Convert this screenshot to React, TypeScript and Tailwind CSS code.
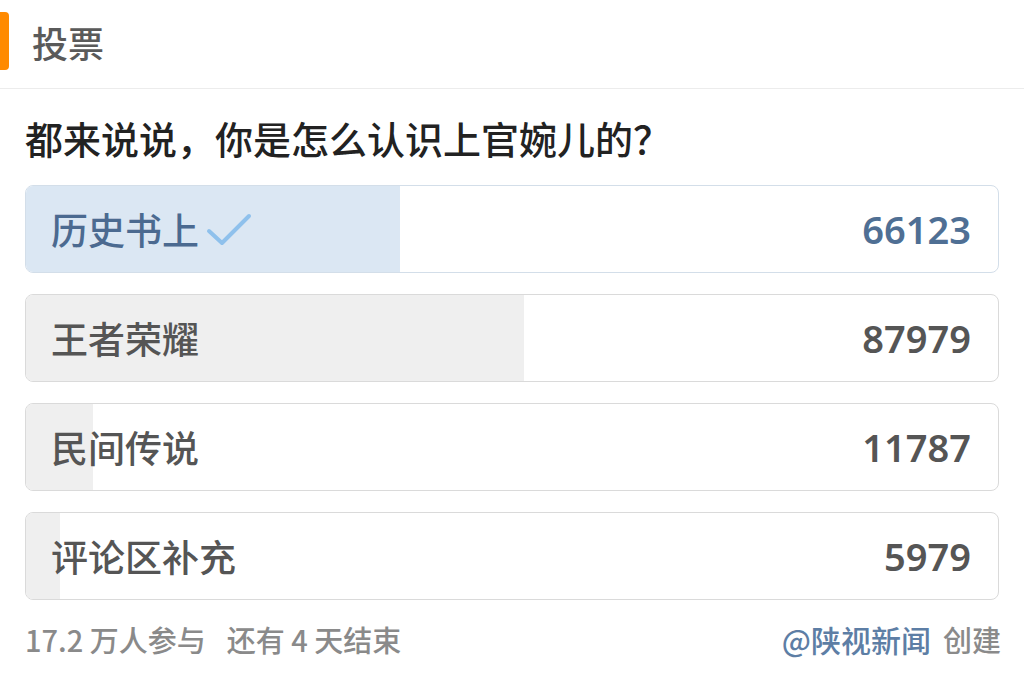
import React from "react";

const options = [
  { label: "历史书上", count: 66123, selected: true },
  { label: "王者荣耀", count: 87979, selected: false },
  { label: "民间传说", count: 11787, selected: false },
  { label: "评论区补充", count: 5979, selected: false },
];

const total = options.reduce((s, o) => s + o.count, 0);

const font = { fontFamily: '"Noto Sans CJK SC", "Noto Sans", sans-serif' };
const numFont = { fontFamily: '"Noto Sans", "Noto Sans CJK SC", sans-serif' };

function Check() {
  return (
    <svg width="46" height="34" viewBox="0 0 46 34" className="ml-[7px] mt-[2px]">
      <path d="M3 18 L16 30 L43 3" fill="none" stroke="#8fc1ec" strokeWidth="4" strokeLinecap="round" strokeLinejoin="round" />
    </svg>
  );
}

export default function App() {
  return (
    <div className="w-[1024px] h-[681px] bg-white overflow-hidden" style={font}>
      <div className="h-[89px] flex items-center border-b border-[#ececec] relative">
        <div className="absolute left-0 top-[12px] w-[9px] h-[58px] bg-[#ff8a00] rounded-r-[4px]" />
        <span className="ml-[32px] text-[36px] text-[#5a5a5a] font-medium leading-none -mt-[4px]">投票</span>
      </div>
      <div className="px-[25px]">
        <div className="h-[96px] flex items-center text-[38px] text-[#222] font-medium leading-none pt-[2px]">
          都来说说，你是怎么认识上官婉儿的？
        </div>
        <div className="flex flex-col gap-[21px]">
          {options.map((o) => (
            <div
              key={o.label}
              className={`relative h-[88px] rounded-[8px] border overflow-hidden ${o.selected ? "border-[#d3dee9]" : "border-[#dadada]"}`}
            >
              <div
                className={`absolute left-0 top-0 bottom-0 ${o.selected ? "bg-[#dbe7f3]" : "bg-[#efefef]"}`}
                style={{ width: `${(o.count / total) * 100}%` }}
              />
              <div className="relative h-full flex items-center justify-between pl-[25px] pr-[27px]">
                <div className="flex items-center">
                  <span className={`text-[37px] leading-none font-medium ${o.selected ? "text-[#4b6a90]" : "text-[#555]"}`}>
                    {o.label}
                  </span>
                  {o.selected && <Check />}
                </div>
                <span
                  className={`text-[38px] leading-none font-semibold ${o.selected ? "text-[#4f6f94]" : "text-[#555]"}`}
                  style={numFont}
                >
                  {o.count}
                </span>
              </div>
            </div>
          ))}
        </div>
        <div className="h-[80px] flex items-center justify-between text-[29px] leading-none font-medium pb-[2px]">
          <div className="text-[#8a8a8a] flex items-center">
            <span>17.2 万人参与</span>
            <span className="ml-[21px]">还有 4 天结束</span>
          </div>
          <div className="flex items-center mr-[-2px]">
            <span className="text-[#5d7ea5] text-[30px]">@陕视新闻</span>
            <span className="ml-[12px] text-[#8a8a8a]">创建</span>
          </div>
        </div>
      </div>
    </div>
  );
}
